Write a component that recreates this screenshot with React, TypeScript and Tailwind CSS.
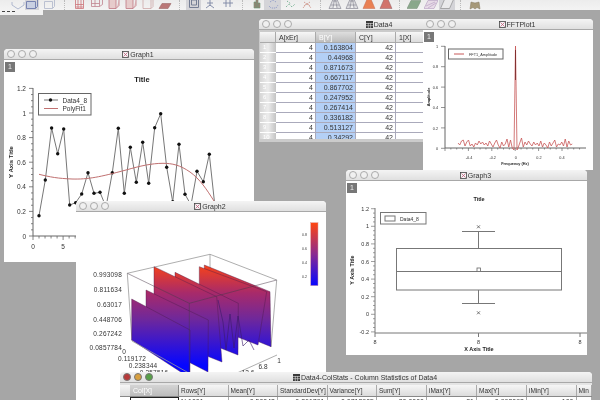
const data4 = ["0.163804", "0.44968", "0.871673", "0.667117", "0.867702", "0.247952", "0.267414", "0.336182", "0.513127", "0.34292"];

const series = [
  [39, 215.7], [45.3, 180], [51.6, 128], [57.7, 153.7], [63.7, 129], [69.7, 205], [75.7, 202.7], [81.7, 194], [88, 172.7], [94, 193.3],
  [100, 192.3], [106, 207], [112.3, 172.7], [118.3, 128.3], [124.3, 193.3], [130.3, 147.3], [136.3, 182.3], [142.7, 142.3], [148.7, 183.3], [154.7, 127.7],
  [160.7, 113.7], [166.7, 167.3], [172.7, 201.7], [179, 144.3], [185, 194.3], [191, 205], [197, 171.3], [203.3, 181.7], [209.3, 154.3], [215, 207],
];

const fftNoise = [143, 145, 141, 140, 146, 142, 140, 146, 144, 147, 143, 145, 141, 144, 142, 145, 143, 146, 141, 144, 147, 143, 140, 145, 148, 142, 146, 144, 139, 147, 140, 148];
const fftNoise2 = [148, 143, 138, 147, 142, 145, 141, 144, 146, 142, 145, 143, 146, 141, 147, 143, 145, 148, 142, 146, 143, 140, 147, 144, 145, 142, 146, 139, 147, 141, 145, 144];

const tools = [
  { w: "w-[10px]", kind: "none" },
  { w: "w-[15px]", kind: "hex" },
  { w: "w-[14px]", kind: "cube", sel: true },
  { w: "w-[19px]", kind: "box" },
  { w: "w-[13px]", kind: "sep" },
  { w: "w-[17px]", kind: "grid" },
  { w: "w-[18px]", kind: "grid2" },
  { w: "w-[16px]", kind: "cube2" },
  { w: "w-[17px]", kind: "cube2" },
  { w: "w-[17px]", kind: "box2" },
  { w: "w-[17px]", kind: "flat" },
  { w: "w-[13px]", kind: "sep" },
  { w: "w-[15px]", kind: "frame", sel: true },
  { w: "w-[18px]", kind: "axes" },
  { w: "w-[17px]", kind: "axes2" },
  { w: "w-[12px]", kind: "sep" },
  { w: "w-[16px]", kind: "bars" },
  { w: "w-[17px]", kind: "dots", sel: true },
  { w: "w-[17px]", kind: "dots2" },
  { w: "w-[17px]", kind: "dots3" },
  { w: "w-[11px]", kind: "sep" },
  { w: "w-[17px]", kind: "cone" },
  { w: "w-[17px]", kind: "cone" },
  { w: "w-[17px]", kind: "fire" },
  { w: "w-[17px]", kind: "fire2" },
  { w: "w-[11px]", kind: "sep" },
  { w: "w-[17px]", kind: "slab" },
  { w: "w-[17px]", kind: "slab2" },
  { w: "w-[16px]", kind: "slab3", sel: true },
  { w: "w-[11px]", kind: "sep" },
  { w: "w-[17px]", kind: "gold" },
];

function ToolIcon({ kind }: { kind: string }) {
  if (kind === "none") return null;
  if (kind === "sep") return <div className="h-full border-l border-dotted border-[#bbb]" />;
  return (
    <svg width="14" height="14" viewBox="0 0 14 14" className="shrink-0 opacity-75" fill="none">
      {kind === "hex" && <path d="M1 6v3l6 4 6-4V6" stroke="#9aa6c4" />}
      {kind === "cube" && <path d="M1.5 5.5h9v7h-9zM10.5 12.5l2-2V4" stroke="#5a6aa4" fill="#c6cfe6" />}
      {kind === "box" && <path d="M2.5 5.5h8v7h-8zM10.5 12.5l2-2V4" stroke="#aab2c8" />}
      {kind === "grid" && <path d="M2.5 4v8.5h8V4M2.5 8.5h8M2.5 11h8M5 4v8.5M8 4v8.5" stroke="#c04a50" strokeWidth=".8" />}
      {kind === "grid2" && <path d="M1.5 4v6.5h8V4M1.5 7.5h8M5 4v6.5M9.5 10.5l3-2V4" stroke="#b06070" strokeWidth=".8" />}
      {kind === "cube2" && <path d="M2 4v8.5h7V4M9 12.5l3-3V4" stroke="#b05060" fill="#e4c0c0" strokeWidth=".8" />}
      {kind === "box2" && <path d="M2 4v8.5h8V4M10 12.5l2-2V4" stroke="#c09090" strokeWidth=".8" />}
      {kind === "flat" && <path d="M1 12.5l3-5h9l-3 5z" fill="#a85050" stroke="#803a3a" strokeWidth=".6" />}
      {kind === "frame" && <path d="M2.5 3v8.5h9V3M4.5 4h5v5h-5z" stroke="#56627e" />}
      {kind === "axes" && <path d="M7 3v7M3 12l4-3 4 3M4 7h6" stroke="#55628a" strokeWidth=".9" />}
      {kind === "axes2" && <path d="M5 3v8M9 3v8M2 7h10" stroke="#55628a" strokeWidth=".9" />}
      {kind === "bars" && <path d="M5 12V6h2v6zM7 12V3h2v9zM9 12V7h2v5z" fill="#8a5a50" stroke="#3a7a4a" strokeWidth=".6" />}
      {kind === "dots" && <path d="M3 10l2 2h5l2-3M4 6l3-2 3 2" stroke="#7080c0" strokeDasharray="1 1" />}
      {kind === "dots2" && <path d="M3 11l3-3 3 3 3-3M4 5l4 3" stroke="#4a9a70" strokeDasharray="1.2 1.2" />}
      {kind === "dots3" && <path d="M3 12l4-5 4 5M4 6l6 4M10 6l-6 4" stroke="#c07060" strokeDasharray="1 1" />}
      {kind === "cone" && <path d="M1 12.5h12L8 1H6zM3 9h8M5 5h4M5 12l2-11 2 11" stroke="#6a6a7a" strokeWidth=".7" fill="#d8d8dc" />}
      {kind === "fire" && <path d="M1 12.5h12L8 1H6z" fill="#e85c20" stroke="#b04020" strokeWidth=".5" />}
      {kind === "fire2" && <path d="M1 12.5h12L8 1H6z" fill="#c84a40" stroke="#703038" strokeWidth=".5" />}
      {kind === "slab" && <path d="M0 12.5l4-8h10l-4 8z" fill="#68906a" stroke="#4a6a4c" strokeWidth=".5" />}
      {kind === "slab2" && <path d="M0 12.5l4-8h10l-4 8zM2 10l9-4M4 12l8-5" fill="#e4d4e4" stroke="#a080b0" strokeWidth=".6" />}
      {kind === "slab3" && <path d="M0.5 12.5l4-9h9l-4 9z" fill="#f2f2f2" stroke="#777" strokeWidth=".7" />}
      {kind === "gold" && <path d="M2 13l1-7 4 1 4-1 1 7-3-1.5-2 1.500-2-1.500z" fill="#8e7c52" stroke="#5e5030" strokeWidth=".5" />}
    </svg>
  );
}

function Toolbar() {
  return (
    <div className="relative">
      <div className="flex h-[10px] overflow-hidden bg-gradient-to-b from-[#ececec] to-[#f3f3f3]">
        {tools.map((t, i) => (
          <div key={i} className={`${t.w} h-full flex items-end justify-center ${t.sel ? "bg-[#d4d4d8]" : ""}`}>
            <ToolIcon kind={t.kind} />
          </div>
        ))}
      </div>
      <div className="w-[43px] h-[5px] bg-[#f1f1f1] pl-[2px] pt-px">
        <div className="w-[13px] border-t border-dashed border-[#444]" />
      </div>
    </div>
  );
}

function TitleIcon({ table }: { table?: boolean }) {
  if (table) {
    return (
      <svg width="7" height="7" viewBox="0 0 7 7" className="shrink-0 mr-px">
        <rect width="7" height="7" fill="#3a3a3a" />
        <path d="M0 2.500h7M0 4.700h7M2.300 2v5M4.600 2v5" stroke="#ddd" strokeWidth=".6" />
      </svg>
    );
  }
  return (
    <svg width="7" height="7" viewBox="0 0 7 7" className="shrink-0 mr-px">
      <rect x=".5" y=".5" width="6" height="6" fill="#f4f4f4" stroke="#444" strokeWidth=".8" />
      <path d="M1.500 1.500l4 4M5.500 1.500l-4 4" stroke="#c05a7a" strokeWidth=".8" />
    </svg>
  );
}

function Win({ pos, title, table, color, children }: { pos: string; title: string; table?: boolean; color?: boolean; children: React.ReactNode }) {
  return (
    <div className={`absolute ${pos} flex flex-col rounded-t-[4px] overflow-hidden bg-white`}>
      <div className="grid grid-cols-[1fr_auto_1fr] items-center h-[11px] shrink-0 bg-gradient-to-b from-[#f4f4f4] to-[#e0e0e0] border-b border-[#a8a8a8]">
        <div className="flex gap-[3px] pl-[3px]">
          {color ? (
            <>
              <span className="w-[8px] h-[8px] rounded-full bg-[#b83a3a] border border-[#777]" />
              <span className="w-[8px] h-[8px] rounded-full bg-[#d8a040] border border-[#777]" />
              <span className="w-[8px] h-[8px] rounded-full bg-[#58a048] border border-[#777]" />
            </>
          ) : (
            <>
              <span className="w-[8px] h-[8px] rounded-full bg-[#f0f0f0] border border-[#aaa]" />
              <span className="w-[8px] h-[8px] rounded-full bg-[#f0f0f0] border border-[#aaa]" />
              <span className="w-[8px] h-[8px] rounded-full bg-[#f0f0f0] border border-[#aaa]" />
            </>
          )}
        </div>
        <div className="flex items-center pl-[18px] text-[7px] leading-none text-[#333] whitespace-nowrap">
          <TitleIcon table={table} />
          {title}
        </div>
        <div />
      </div>
      <div className="relative flex-1 min-h-0">{children}</div>
    </div>
  );
}

function Badge() {
  return (
    <div className="absolute left-px top-[2px] w-[10px] h-[10px] bg-[#777] text-[#eee] text-[7px] leading-[10px] text-center">1</div>
  );
}

function range(a: number, b: number, step: number) {
  const out: number[] = [];
  for (let v = a; v <= b + 0.001; v += step) out.push(v);
  return out;
}

const chartFont = { fontFamily: "'Liberation Sans', sans-serif" };

function Graph1Chart() {
  const y = (v: number) => 236 - 123 * v;
  return (
    <svg viewBox="4 60 250 202" className="block w-full h-full" style={chartFont}>
      <text x="142" y="82" textAnchor="middle" fontSize="7.500" fontWeight="bold" fill="#222">Title</text>
      <path d="M33 88v148H160" stroke="#666" fill="none" />
      {range(0, 1.2, 0.05).map((v, i) => (
        <path key={i} d={`M${i % 4 === 0 ? 29 : 31} ${y(v)}H33`} stroke="#666" strokeWidth=".8" />
      ))}
      {[0, 0.2, 0.4, 0.6, 0.8, 1, 1.2].map((v) => (
        <text key={v} x="26" y={y(v) + 2.500} textAnchor="end" fontSize="6.500" fill="#333">{v}</text>
      ))}
      {range(0, 12, 1).map((n) => (
        <path key={n} d={`M${33 + n * 6.02} 236v${n % 5 === 0 ? 4 : 2.500}`} stroke="#666" strokeWidth=".8" />
      ))}
      <text x="33" y="248.500" textAnchor="middle" fontSize="6.500" fill="#333">0</text>
      <text x="63" y="248.500" textAnchor="middle" fontSize="6.500" fill="#333">5</text>
      <text transform="translate(13 162) rotate(-90)" textAnchor="middle" fontSize="6" fontWeight="bold" fill="#222">Y Axis Title</text>
      <polyline points={series.map((p) => p.join(",")).join(" ")} fill="none" stroke="#777" strokeWidth="1" />
      {series.map((p, i) => (
        <circle key={i} cx={p[0]} cy={p[1]} r="1.700" fill="#111" />
      ))}
      <path d="M39 174.300C50 177 58 178.500 72 179C88 179.500 100 177 126 170C140 166 152 163.300 163 163.300C172 163.300 180 165 190 172C200 179 207 190 214 201" fill="none" stroke="#c07070" strokeWidth="1" />
      <rect x="38.500" y="93.500" width="52.500" height="21.500" fill="#fff" stroke="#666" strokeWidth="1" />
      <path d="M44 100h14" stroke="#777" />
      <circle cx="50.500" cy="100" r="1.700" fill="#111" />
      <path d="M44 108.500h14" stroke="#c07070" />
      <text x="62.500" y="102.500" fontSize="6.500" fill="#333">Data4_8</text>
      <text x="62.500" y="111" fontSize="6.500" fill="#333">PolyFit1</text>
    </svg>
  );
}

function FftChart() {
  const left = fftNoise.map((v, i) => `${458 + i * 1.75},${v}`);
  const right = fftNoise2.map((v, i) => `${518 + i * 1.75},${v}`);
  const points = [...left, "514,150", "515.500,46", "517,150", ...right].join(" ");
  return (
    <svg viewBox="423 30 170 140" className="block w-full h-full" style={chartFont}>
      <path d="M445 46v102H586" fill="none" stroke="#666" />
      {[0, 0.2, 0.4, 0.6, 0.8, 1].map((v) => (
        <g key={v}>
          <path d={`M441 ${148.300 - v * 102}h4`} stroke="#666" strokeWidth=".7" />
          <text x="438" y={150 - v * 102} textAnchor="end" fontSize="3.800" fill="#333">{v}</text>
        </g>
      ))}
      {range(0, 23, 1).map((n) => (
        <path key={n} d={`M${445 + n * 5.85} 148v${n % 4 === 0 ? 3 : 1.500}`} stroke="#666" strokeWidth=".7" />
      ))}
      {[["-0.4", 469], ["-0.2", 492.7], ["0", 515.7], ["0.2", 539], ["0.4", 562]].map(([t, x]) => (
        <text key={t} x={x} y="159" textAnchor="middle" fontSize="3.800" fill="#333">{t}</text>
      ))}
      <text x="515" y="165" textAnchor="middle" fontSize="3.800" fontWeight="bold" fill="#222">Frequency (Hz)</text>
      <text transform="translate(430 97) rotate(-90)" textAnchor="middle" fontSize="3.800" fontWeight="bold" fill="#222">Amplitude</text>
      <polyline points={points} fill="none" stroke="#c85858" strokeWidth=".8" />
      <path d="M515.500 50v30" stroke="#702020" strokeWidth=".8" />
      <rect x="448.500" y="49" width="54.500" height="10" fill="#fff" stroke="#666" />
      <path d="M454 54h10" stroke="#c85858" />
      <text x="469" y="55.500" fontSize="3.800" fill="#333">FFT1_Amplitude</text>
    </svg>
  );
}

function Graph3Chart() {
  const y = (v: number) => 314.3 - 88 * v;
  return (
    <svg viewBox="346 181 241 174" className="block w-full h-full" style={chartFont}>
      <text x="479" y="201" textAnchor="middle" fontSize="5.500" fontWeight="bold" fill="#222">Title</text>
      <path d="M375 208v125H587" fill="none" stroke="#777" />
      {range(-0.2, 1.2, 0.05).map((v, i) => (
        <path key={i} d={`M${i % 4 === 0 ? 371 : 373} ${y(v)}H375`} stroke="#777" strokeWidth=".7" />
      ))}
      {[-0.2, 0, 0.2, 0.4, 0.6, 0.8, 1, 1.2].map((v) => (
        <text key={v} x="369" y={y(v) + 2} textAnchor="end" fontSize="5.500" fill="#333">{v}</text>
      ))}
      {[375, 478.5, 580].map((x) => (
        <g key={x}>
          <path d={`M${x} 333v4`} stroke="#777" />
          <text x={x} y="344" textAnchor="middle" fontSize="5.500" fill="#333">8</text>
        </g>
      ))}
      <text x="479" y="351" textAnchor="middle" fontSize="5.500" fontWeight="bold" fill="#222">X Axis Title</text>
      <text transform="translate(354 270) rotate(-90)" textAnchor="middle" fontSize="5.500" fontWeight="bold" fill="#222">Y Axis Title</text>
      <rect x="396.500" y="248.500" width="165" height="41.500" fill="none" stroke="#777" />
      <path d="M396.500 271.500H561.500M478.500 248V232M478.500 290V304M462 231.500H495M462 303.500H495" stroke="#777" fill="none" />
      <rect x="477" y="268" width="3.500" height="3.500" fill="#fff" stroke="#666" strokeWidth=".8" />
      <path d="M477 225.300l3 3M480 225.300l-3 3M477 311.300l3 3M480 311.300l-3 3" stroke="#555" strokeWidth=".8" />
      <rect x="380.500" y="212.500" width="45.500" height="11.500" fill="#fff" stroke="#777" />
      <rect x="385" y="216" width="10" height="5" fill="none" stroke="#777" />
      <text x="400" y="221" fontSize="5" fill="#333">Data4_8</text>
    </svg>
  );
}

function Graph2Chart() {
  const slabs = [
    "204.3,265 270,291.7 271,346.7 204.3,320",
    "199.3,266.7 266.7,291.7 258,345 199.3,322",
    "175,272.3 238.300,303.300 238,355 175,330",
    "154,266.7 216.7,296.7 222,362 154,335",
    "146,290 208.3,320 208,372 146,340",
    "131.7,299 190,330 190,378 131.7,340",
  ];
  const zLabels = [["0.993098", 277], ["0.811634", 292], ["0.63017", 307], ["0.448706", 322], ["0.267242", 336], ["0.0857784", 350]];
  return (
    <svg viewBox="76 212 250 188" className="block w-full h-full" style={chartFont}>
      <defs>
        <linearGradient id="surf" gradientUnits="userSpaceOnUse" x1="0" y1="262" x2="0" y2="365">
          <stop offset="0" stopColor="#ff4510" />
          <stop offset="0.3" stopColor="#a82a6a" />
          <stop offset="0.55" stopColor="#70289a" />
          <stop offset="1" stopColor="#0606ff" />
        </linearGradient>
        <linearGradient id="scale" x1="0" y1="0" x2="0" y2="1">
          <stop offset="0" stopColor="#ff4510" />
          <stop offset="0.5" stopColor="#8a2a90" />
          <stop offset="1" stopColor="#0606ff" />
        </linearGradient>
      </defs>
      <path d="M127.300 273.300L210 254.300L276.700 280M127.300 273.300L132 341M276.700 280L271 347" fill="none" stroke="#999" strokeWidth=".8" />
      <path d="M210 254.300V300" stroke="#999" strokeWidth=".8" />
      {slabs.map((p, i) => (
        <polygon key={i} points={p} fill="url(#surf)" stroke="#4a1a4a" strokeWidth=".4" />
      ))}
      <path d="M218 300l5 22 3 28 4-36 4 34 4-32 5 30 6-6 5 10" fill="none" stroke="#3a1a6a" strokeWidth=".6" />
      <path d="M127.300 273.300L189.300 303.300L276.700 280M189.300 303.300V400" fill="none" stroke="#4a3a4a" strokeWidth=".5" />
      <path d="M132 341L210 385M277 355L237 373" fill="none" stroke="#999" strokeWidth=".8" />
      {zLabels.map(([t, yy]) => (
        <text key={t} x="122" y={yy} textAnchor="end" fontSize="6.500" letterSpacing=".2" fill="#333">{t}</text>
      ))}
      <text x="124" y="354" textAnchor="middle" fontSize="6.500" fill="#333">0</text>
      <text x="132" y="361" textAnchor="middle" fontSize="6.500" letterSpacing=".2" fill="#333">0.119172</text>
      <text x="143" y="368" textAnchor="middle" fontSize="6.500" letterSpacing=".2" fill="#333">0.238344</text>
      <text x="154" y="375" textAnchor="middle" fontSize="6.500" letterSpacing=".2" fill="#333">0.357516</text>
      <text x="279" y="363" textAnchor="middle" fontSize="6.500" fill="#333">1</text>
      <text x="263" y="368.500" textAnchor="middle" fontSize="6.500" fill="#333">6.8</text>
      <text x="248" y="374.500" textAnchor="middle" fontSize="6.500" fill="#333">12.6</text>
      <rect x="310.700" y="222.700" width="7.300" height="63" fill="url(#scale)" stroke="#e0a0a0" strokeWidth=".5" />
      {[["0.8", 236], ["0.6", 250], ["0.4", 264], ["0.2", 278]].map(([t, yy]) => (
        <text key={t} x="304.500" y={yy} textAnchor="middle" fontSize="3.500" fill="#333">{t}</text>
      ))}
    </svg>
  );
}

function Data4Table() {
  const cell = "h-[10px] border-b border-r border-[#aab] leading-[9px] text-right pr-[2px] text-[7px] text-[#333]";
  const head = "h-[11px] border-r border-b border-[#aaa] bg-gradient-to-b from-[#f6f6f6] to-[#dcdcdc] leading-[11px] pl-[3px] text-[7px] text-[#333]";
  return (
    <div className="h-full bg-[#cbcbcb] pt-[2px] pl-px">
      <div className="grid grid-cols-[16px_40px_40px_40px_1fr] h-[107px] overflow-hidden bg-white">
        <div className={head} />
        <div className={head}>A[xEr]</div>
        <div className="h-[11px] border-r border-b border-[#aaa] bg-gradient-to-b from-[#dedede] to-[#bdbdbd] leading-[11px] pl-[3px] text-[7px] text-white">B[Y]</div>
        <div className={head}>C[Y]</div>
        <div className={head}>1[X]</div>
        {data4.map((v, i) => (
          <div key={i} className="contents">
            <div className="h-[10px] border-b border-white bg-gradient-to-r from-[#d6d6d6] via-[#ececec] to-[#c4c4c4] text-[6px] leading-[9px] text-white pl-[3px]">{i + 1}</div>
            <div className={cell}>4</div>
            <div className={`${cell} bg-[#b4d0f6]`}>{v}</div>
            <div className={cell}>42</div>
            <div className={cell} />
          </div>
        ))}
      </div>
    </div>
  );
}

function ColStatsTable() {
  const heads = ["Rows[Y]", "Mean[Y]", "StandardDev[Y]", "Variance[Y]", "Sum[Y]", "iMax[Y]", "Max[Y]", "iMin[Y]", "Min"];
  const row1 = ["N 1001", "0.50048", "0.261791", "0.0713905", "20.0000", "21", "0.993098", "100", ""];
  const cols = "grid grid-cols-[59px_49.500px_49.500px_49.500px_49.500px_50px_50px_50px_49.500px_1fr]";
  return (
    <div className="h-full bg-[#e4e4e4] pt-[2px]">
      <div className={`${cols} h-[12px] bg-gradient-to-b from-[#f6f6f6] to-[#dcdcdc] border-b border-[#888]`}>
        <div className="pl-[10px]">
          <div className="h-full bg-gradient-to-b from-[#d4d4d4] to-[#bcbcbc] border-r border-[#888] text-[7px] leading-[11px] pl-[3px] text-white">Col[X]</div>
        </div>
        {heads.map((h) => (
          <div key={h} className="border-r border-[#aaa] text-[6.500px] leading-[11px] pl-[2px] text-[#333] whitespace-nowrap overflow-hidden">{h}</div>
        ))}
      </div>
      <div className={`${cols} h-[6px] bg-white`}>
        <div className="pl-[10px]">
          <div className="h-full border border-[#222]" />
        </div>
        {row1.map((v, i) => (
          <div key={i} className={`border-r border-[#aaa] text-[7px] leading-[9px] pr-[2px] text-[#333] whitespace-nowrap overflow-hidden ${i === 0 ? "pl-[2px]" : "text-right"}`}>{v}</div>
        ))}
      </div>
    </div>
  );
}

export default function App() {
  return (
    <div className="relative w-[600px] h-[400px] overflow-hidden bg-[#a6a6a6] blur-[0.5px] font-['Liberation_Sans',sans-serif]">
      <Toolbar />
      <Win pos="left-[4px] top-[49px] w-[250px] h-[213px]" title="Graph1">
        <Graph1Chart />
        <Badge />
      </Win>
      <Win pos="left-[259px] top-[19px] w-[222px] h-[123px]" title="Data4" table>
        <Data4Table />
      </Win>
      <Win pos="left-[423px] top-[19px] w-[170px] h-[151px]" title="FFTPlot1">
        <FftChart />
        <Badge />
      </Win>
      <Win pos="left-[346px] top-[170px] w-[241px] h-[185px]" title="Graph3">
        <Graph3Chart />
        <Badge />
      </Win>
      <Win pos="left-[76px] top-[201px] w-[250px] h-[199px]" title="Graph2">
        <Graph2Chart />
      </Win>
      <Win pos="left-[120px] top-[372px] w-[472px] h-[28px]" title="Data4-ColStats - Column Statistics of Data4" table color>
        <ColStatsTable />
      </Win>
    </div>
  );
}
